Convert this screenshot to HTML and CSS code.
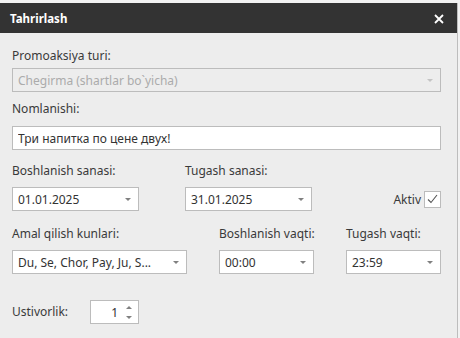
FILE: index.html
```html
<!DOCTYPE html>
<html lang="uz">

<head>
    <meta charset="UTF-8">
    <title>Tahrirlash</title>
    <link rel="stylesheet" href="styles.css">
</head>

<body>

    <!-- Dialog -->
    <div class="dialog">
        <div class="dialog-header">
            <span class="dialog-title">Tahrirlash</span>
            <span class="close-button">
                <svg width="10" height="10" viewBox="0 0 10 10">
                    <path d="M1 1 L9 9 M9 1 L1 9" stroke="#fff" stroke-width="1.8" />
                </svg>
            </span>
        </div>

        <div class="dialog-body">
            <div class="label label-first">Promoaksiya turi:</div>
            <div class="field field-wide field-disabled">
                <span class="field-text">Chegirma (shartlar bo`yicha)</span>
                <span class="arrow arrow-light"></span>
            </div>

            <div class="label label-name">Nomlanishi:</div>
            <div class="field field-wide field-input">
                <span class="field-text">Три напитка по цене двух!</span>
            </div>

            <!-- Dates -->
            <div class="row row-dates">
                <div class="col col-date">
                    <div class="label">Boshlanish sanasi:</div>
                    <div class="field">
                        <span class="field-text">01.01.2025</span>
                        <span class="arrow"></span>
                    </div>
                </div>
                <div class="col col-date col-end-date">
                    <div class="label">Tugash sanasi:</div>
                    <div class="field">
                        <span class="field-text">31.01.2025</span>
                        <span class="arrow"></span>
                    </div>
                </div>
                <div class="active">
                    <span>Aktiv</span>
                    <span class="checkbox">
                        <svg width="11" height="10" viewBox="0 0 11 10">
                            <path d="M1 5.5 L4 8.5 L10 1" stroke="#555" stroke-width="1.1" fill="none" />
                        </svg>
                    </span>
                </div>
            </div>

            <!-- Days and time -->
            <div class="row row-times">
                <div class="col col-days">
                    <div class="label">Amal qilish kunlari:</div>
                    <div class="field">
                        <span class="field-text">Du, Se, Chor, Pay, Ju, S...</span>
                        <span class="arrow"></span>
                    </div>
                </div>
                <div class="col col-time">
                    <div class="label">Boshlanish vaqti:</div>
                    <div class="field">
                        <span class="field-text">00:00</span>
                        <span class="arrow"></span>
                    </div>
                </div>
                <div class="col col-time">
                    <div class="label">Tugash vaqti:</div>
                    <div class="field">
                        <span class="field-text">23:59</span>
                        <span class="arrow"></span>
                    </div>
                </div>
            </div>

            <!-- Priority -->
            <div class="row row-priority">
                <div class="label label-priority">Ustivorlik:</div>
                <div class="field field-spin">
                    <span class="spin-value">1</span>
                    <span class="spin-buttons">
                        <span class="spin-up"></span>
                        <span class="spin-down"></span>
                    </span>
                </div>
            </div>
        </div>
    </div>

</body>

</html>
```

FILE: styles.css
```css
/* General Reset */
body {
    margin: 0;
    font-family: "Noto Sans", "Open Sans", sans-serif;
    font-size: 12px;
    background: #f2f2f2;
    color: #333;
}

/* Dialog */
.dialog {
    width: 457px;
    height: 335px;
    margin-top: 3px;
    background: #ededed;
    border-right: 1px solid #bdbdbd;
    overflow: hidden;
}

.dialog-header {
    height: 30px;
    background: #333333;
    display: flex;
    align-items: center;
    justify-content: space-between;
    padding: 0 13px 0 10px;
}

.dialog-title {
    color: #fff;
    font-size: 11.5px;
    font-weight: bold;
}

.close-button {
    display: flex;
    margin-top: 2px;
}

/* Body */
.dialog-body {
    padding: 15px 0 0 12px;
}

.label {
    line-height: 16px;
    color: #3a3a3a;
    white-space: nowrap;
}

.label-name {
    margin-top: 9px;
}

.field {
    box-sizing: border-box;
    height: 24px;
    border: 1px solid #bcbcbc;
    background: #fff;
    display: flex;
    align-items: center;
    padding-left: 5px;
    margin-top: 8px;
}

.label-first + .field {
    margin-top: 4px;
}

.field-text {
    flex-grow: 1;
    white-space: nowrap;
    overflow: hidden;
    color: #333;
}

.field-wide {
    width: 429px;
}

.field-input {
    margin-top: 9px;
}

.field-disabled {
    background: #ededed;
}

.field-disabled .field-text {
    color: #ababab;
}

/* Dropdown arrow */
.arrow {
    width: 0;
    height: 0;
    border-left: 3.5px solid transparent;
    border-right: 3.5px solid transparent;
    border-top: 3px solid #808080;
    margin: 1px 7px 0 4px;
}

.arrow-light {
    border-top-color: #c4c4c4;
}

/* Rows */
.row {
    display: flex;
    width: 429px;
}

.row-dates {
    margin-top: 13px;
}

.col-date {
    width: 127px;
}

.col-end-date {
    margin-left: 46px;
}

.active {
    display: flex;
    align-items: center;
    margin: 24px 0 0 auto;
    color: #3a3a3a;
}

.checkbox {
    box-sizing: border-box;
    width: 17px;
    height: 17px;
    border: 1px solid #bcbcbc;
    background: #fff;
    margin-left: 3px;
    display: flex;
    align-items: center;
    justify-content: center;
}

.row-times {
    margin-top: 15px;
    gap: 32px;
}

.col-days {
    width: 175px;
}

.col-time {
    width: 95px;
}

/* Priority spinner */
.row-priority {
    margin-top: 26px;
    align-items: center;
}

.label-priority {
    width: 78px;
}

.field-spin {
    width: 49px;
    margin-top: 0;
    padding: 0 6px 0 0;
    justify-content: flex-end;
}

.spin-value {
    margin-right: 8px;
}

.spin-buttons {
    display: flex;
    flex-direction: column;
    gap: 7px;
}

.spin-up,
.spin-down {
    width: 0;
    height: 0;
    border-left: 3px solid transparent;
    border-right: 3px solid transparent;
}

.spin-up {
    border-bottom: 3px solid #808080;
}

.spin-down {
    border-top: 3px solid #808080;
}
```
